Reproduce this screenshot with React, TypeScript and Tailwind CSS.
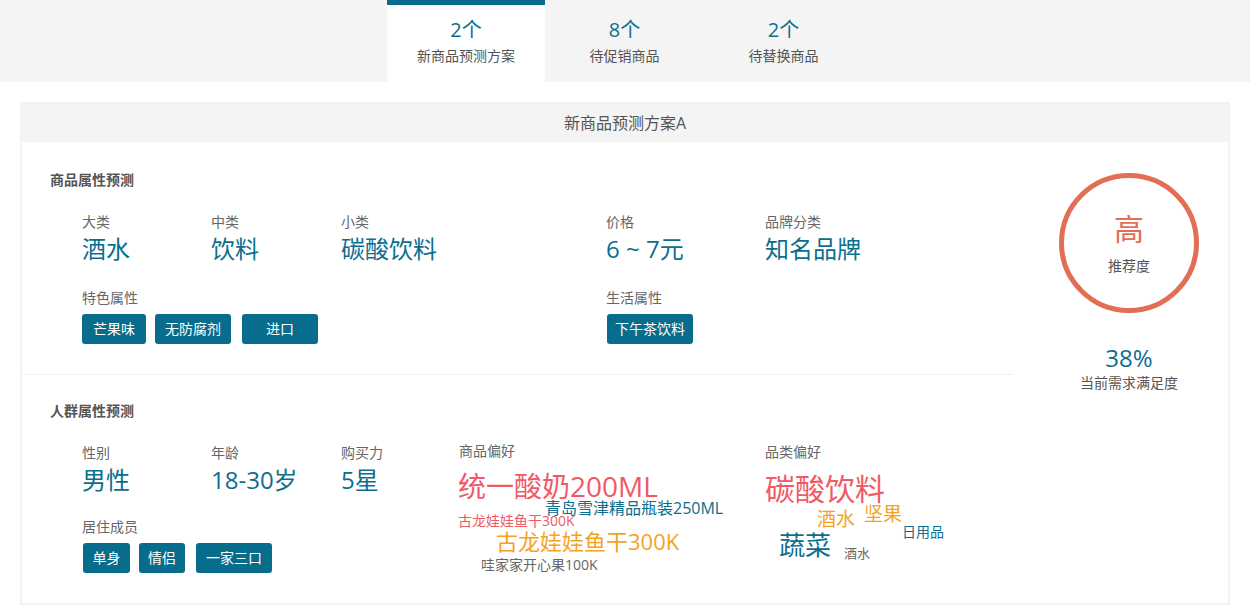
import React from "react";

const FONT = { fontFamily: '"Open Sans", "Noto Sans CJK SC", sans-serif' };

function Tag({ children, w, ml }: { children: React.ReactNode; w: string; ml: string }) {
  return (
    <div className={`h-[30px] ${w} ${ml} rounded-[3px] bg-[#086c8c] text-white text-[14px] leading-[30px] flex items-center justify-center`}>
      {children}
    </div>
  );
}

function Field({ label, value, w }: { label: string; value: string; w: string }) {
  return (
    <div className={`${w} shrink-0`}>
      <div className="text-[14px] leading-[18px] text-[#666]">{label}</div>
      <div className="mt-[3px] text-[24px] leading-[30px] text-[#0b6e8e]">{value}</div>
    </div>
  );
}

function Word({ x, y, size, color, children }: { x: number; y: number; size: number; color: string; children: React.ReactNode }) {
  return (
    <div
      className="absolute whitespace-nowrap leading-none"
      style={{ left: x, top: y - size / 2, fontSize: size, color }}
    >
      {children}
    </div>
  );
}

export default function App() {
  const red = "#f05a66";
  const orange = "#f5a31f";
  const teal = "#0b6e8e";
  const gray = "#666";
  return (
    <div className="w-[1250px] h-[605px] bg-white overflow-hidden" style={FONT}>
      {/* top tabs */}
      <div className="h-[82px] bg-[#f4f4f4] flex justify-center">
        <div className="w-[158px] bg-white border-t-[5px] border-[#086c8c] flex flex-col items-center">
          <div className="mt-[13px] text-[20px] leading-[24px] text-[#0b6e8e]">2个</div>
          <div className="mt-[4px] text-[14px] leading-[20px] text-[#555]">新商品预测方案</div>
        </div>
        <div className="w-[159px] border-t-[5px] border-transparent flex flex-col items-center">
          <div className="mt-[13px] text-[20px] leading-[24px] text-[#0b6e8e]">8个</div>
          <div className="mt-[4px] text-[14px] leading-[20px] text-[#555]">待促销商品</div>
        </div>
        <div className="w-[159px] border-t-[5px] border-transparent flex flex-col items-center">
          <div className="mt-[13px] text-[20px] leading-[24px] text-[#0b6e8e]">2个</div>
          <div className="mt-[4px] text-[14px] leading-[20px] text-[#555]">待替换商品</div>
        </div>
      </div>

      {/* card */}
      <div className="mx-[20px] mt-[20px] h-[503px] border-2 border-[#f2f2f2] flex flex-col">
        <div className="h-[38px] bg-[#f4f4f4] flex items-center justify-center text-[16px] text-[#555]">
          新商品预测方案A
        </div>
        <div className="flex flex-1">
          {/* left */}
          <div className="w-[991px] flex flex-col">
            {/* section 1 */}
            <div className="pt-[29px] pb-[30px] border-b border-[#f0f0f0]">
              <div className="pl-[28px] text-[14px] leading-[18px] font-bold text-[#555]">商品属性预测</div>
              <div className="pl-[60px] mt-[24px] flex">
                <Field label="大类" value="酒水" w="w-[129px]" />
                <Field label="中类" value="饮料" w="w-[130px]" />
                <Field label="小类" value="碳酸饮料" w="w-[265px]" />
                <Field label="价格" value="6 ~ 7元" w="w-[159px]" />
                <Field label="品牌分类" value="知名品牌" w="w-[200px]" />
              </div>
              <div className="pl-[60px] mt-[25px] flex">
                <div className="w-[524px]">
                  <div className="text-[14px] leading-[18px] text-[#666]">特色属性</div>
                  <div className="mt-[7px] flex">
                    <Tag w="w-[64px]" ml="ml-0">芒果味</Tag>
                    <Tag w="w-[76px]" ml="ml-[9px]">无防腐剂</Tag>
                    <Tag w="w-[76px]" ml="ml-[11px]">进口</Tag>
                  </div>
                </div>
                <div>
                  <div className="text-[14px] leading-[18px] text-[#666]">生活属性</div>
                  <div className="mt-[7px] flex">
                    <Tag w="w-[86px]" ml="ml-[1px]">下午茶饮料</Tag>
                  </div>
                </div>
              </div>
            </div>
            {/* section 2 */}
            <div className="pt-[27px]">
              <div className="pl-[28px] text-[14px] leading-[18px] font-bold text-[#555]">人群属性预测</div>
              <div className="pl-[60px] mt-[24px] flex">
                <div className="flex flex-col">
                  <div className="flex">
                    <Field label="性别" value="男性" w="w-[129px]" />
                    <Field label="年龄" value="18-30岁" w="w-[130px]" />
                    <Field label="购买力" value="5星" w="w-[118px]" />
                  </div>
                  <div className="mt-[23px] text-[14px] leading-[18px] text-[#666]">居住成员</div>
                  <div className="mt-[7px] flex">
                    <Tag w="w-[47px]" ml="ml-[1px]">单身</Tag>
                    <Tag w="w-[46px]" ml="ml-[9px]">情侣</Tag>
                    <Tag w="w-[76px]" ml="ml-[11px]">一家三口</Tag>
                  </div>
                </div>
                <div className="w-[306px] shrink-0 -mt-[2px]">
                  <div className="text-[14px] leading-[18px] text-[#666]">商品偏好</div>
                  <div className="relative h-[120px]">
                    <Word x={-1} y={486 - 460} size={28} color={red}>统一酸奶200ML</Word>
                    <Word x={86} y={508 - 460} size={16} color={teal}>青岛雪津精品瓶装250ML</Word>
                    <Word x={-1} y={521 - 460} size={14} color={red}>古龙娃娃鱼干300K</Word>
                    <Word x={37} y={541 - 460} size={22} color={orange}>古龙娃娃鱼干300K</Word>
                    <Word x={22} y={565 - 460} size={14} color={gray}>哇家家开心果100K</Word>
                  </div>
                </div>
                <div className="w-[200px] shrink-0 -mt-[1px]">
                  <div className="text-[14px] leading-[18px] text-[#666]">品类偏好</div>
                  <div className="relative h-[120px]">
                    <Word x={0} y={489 - 461} size={30} color={red}>碳酸饮料</Word>
                    <Word x={52} y={519 - 461} size={19} color={orange}>酒水</Word>
                    <Word x={99} y={514 - 461} size={19} color={orange}>坚果</Word>
                    <Word x={137} y={532 - 461} size={14} color={teal}>日用品</Word>
                    <Word x={14} y={545 - 461} size={26} color={teal}>蔬菜</Word>
                    <Word x={79} y={553 - 461} size={13} color={gray}>酒水</Word>
                  </div>
                </div>
              </div>
            </div>
          </div>
          {/* right */}
          <div className="flex-1 pl-[17px] pt-[31px] flex flex-col items-center">
            <div className="w-[140px] h-[140px] rounded-full border-[5px] border-[#e26f55] flex flex-col items-center">
              <div className="mt-[33px] text-[30px] leading-[36px] text-[#e26f55]">高</div>
              <div className="mt-[10px] text-[14px] leading-[18px] text-[#555]">推荐度</div>
            </div>
            <div className="mt-[30px] text-[24px] leading-[30px] text-[#0b6e8e]">38%</div>
            <div className="mt-[1px] text-[14px] leading-[18px] text-[#555]">当前需求满足度</div>
          </div>
        </div>
      </div>
    </div>
  );
}
